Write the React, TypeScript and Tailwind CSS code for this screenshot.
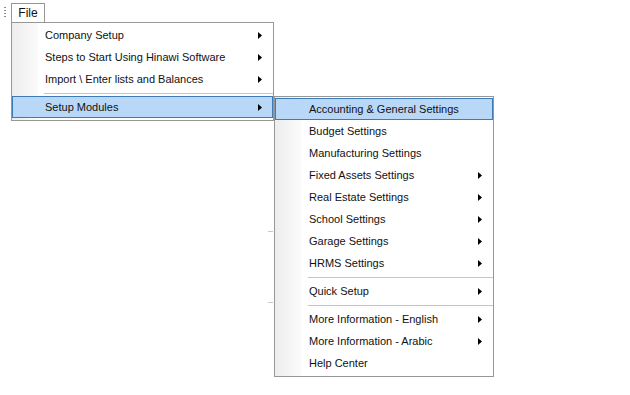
import { ReactNode } from "react";

type Item = { label: string; sub?: boolean; active?: boolean } | "sep";

const mainItems: Item[] = [
  { label: "Company Setup", sub: true },
  { label: "Steps to Start Using Hinawi Software", sub: true },
  { label: "Import \\ Enter lists and Balances", sub: true },
  "sep",
  { label: "Setup Modules", sub: true, active: true },
];

const setupItems: Item[] = [
  { label: "Accounting & General Settings", active: true },
  { label: "Budget Settings" },
  { label: "Manufacturing Settings" },
  { label: "Fixed Assets Settings", sub: true },
  { label: "Real Estate Settings", sub: true },
  { label: "School Settings", sub: true },
  { label: "Garage Settings", sub: true },
  { label: "HRMS Settings", sub: true },
  "sep",
  { label: "Quick Setup", sub: true },
  "sep",
  { label: "More Information - English", sub: true },
  { label: "More Information - Arabic", sub: true },
  { label: "Help Center" },
];

function Arrow() {
  return (
    <svg width="4" height="7" viewBox="0 0 4 7" className="block">
      <path d="M0 0 L4 3.5 L0 7 Z" fill="#000" />
    </svg>
  );
}

function MenuRow({ item, indent }: { item: Item; indent: string }) {
  if (item === "sep") {
    return (
      <div className={"h-[6px] flex items-center " + indent}>
        <div className="h-px w-full bg-[#c5c5c5]" />
      </div>
    );
  }
  return (
    <div
      className={
        "h-[22px] flex items-center justify-between pr-[10px] border " +
        indent +
        (item.active ? " bg-[#b9d8f7] border-[#3c7ab8]" : " border-transparent")
      }
    >
      <span>{item.label}</span>
      {item.sub && <Arrow />}
    </div>
  );
}

function Menu({
  items,
  className,
  indent,
}: {
  items: Item[];
  className: string;
  indent: string;
}): ReactNode {
  return (
    <div className={"absolute bg-white border border-[#979797] pt-px pb-[2px] " + className}>
      {/* image margin */}
      <div className="absolute left-0 top-0 bottom-0 w-[26px] bg-gradient-to-r from-[#ededed] to-[#fbfbfb]" />
      <div className="relative">
        {items.map((it, i) => (
          <MenuRow key={i} item={it} indent={indent} />
        ))}
      </div>
    </div>
  );
}

export default function App() {
  return (
    <div
      className="relative w-[630px] h-[395px] bg-white text-[#111] text-[11px] overflow-hidden"
      style={{ fontFamily: '"Liberation Sans", Arial, sans-serif' }}
    >
      {/* toolstrip grip + File tab */}
      <div className="flex items-start pt-[3px]">
        <div className="flex flex-col gap-[2px] ml-[4px] mt-[4px] mr-[5px]">
          <div className="w-[2px] h-px bg-[#8a8a8a]" />
          <div className="w-[2px] h-px bg-[#8a8a8a]" />
          <div className="w-[2px] h-px bg-[#8a8a8a]" />
          <div className="w-[2px] h-px bg-[#8a8a8a]" />
        </div>
        <div className="w-[34px] h-[20px] border border-b-0 border-[#979797] bg-white flex items-center justify-center text-[12px] pb-px">
          File
        </div>
      </div>

      {/* leftover paint ticks */}
      <div className="absolute left-[268px] top-[231px] w-[5px] h-px bg-[#c8c8c8]" />
      <div className="absolute left-[268px] top-[302px] w-[5px] h-px bg-[#c8c8c8]" />

      <Menu items={mainItems} indent="pl-[32px]" className="left-[11px] top-[22px] w-[263px]" />
      <Menu items={setupItems} indent="pl-[33px]" className="left-[274px] top-[96px] w-[220px]" />
    </div>
  );
}
